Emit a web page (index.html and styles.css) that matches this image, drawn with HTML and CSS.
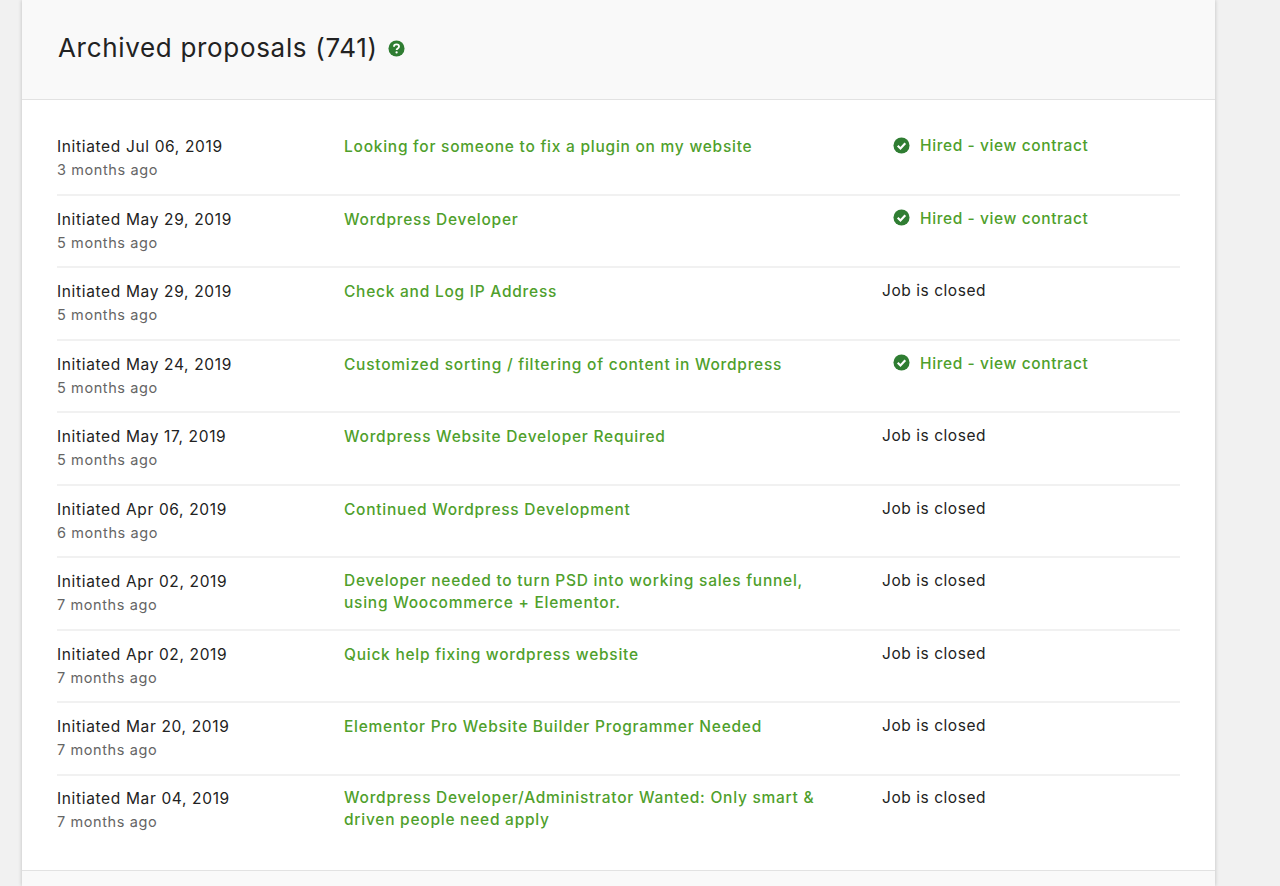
FILE: index.html
```html
<!DOCTYPE html>
<html lang="en">
<head>
<meta charset="utf-8">
<title>Archived proposals</title>
<link rel="stylesheet" href="styles.css">
</head>
<body>
<svg class="defs" width="0" height="0" aria-hidden="true">
  <symbol id="check" viewBox="0 0 18 18"><circle cx="9" cy="9" r="8.5" fill="#2f7d32"/><path d="M5 9.3l2.9 2.9L13 6.6" fill="none" stroke="#fff" stroke-width="2.3"/></symbol>
</svg>
<main class="card">
  <header class="card-head">
    <h1 class="title">Archived proposals (741)</h1>
    <svg class="help" viewBox="0 0 18 18" aria-hidden="true"><circle cx="9" cy="9" r="8.5" fill="#2f7d32"/><path d="M6.3 7.2C6.3 5.6 7.5 4.7 9 4.7s2.7.9 2.7 2.3c0 2-2.6 1.9-2.6 3.6" fill="none" stroke="#fff" stroke-width="1.9"/><circle cx="9.1" cy="13.2" r="1.2" fill="#fff"/></svg>
  </header>
  <section class="list">
    <div class="row"><div class="date"><div class="init">Initiated Jul 06, 2019</div><div class="ago">3 months ago</div></div><a class="job">Looking for someone to fix a plugin on my website</a><div class="status hired"><svg class="tick"><use href="#check"/></svg><a>Hired - view contract</a></div></div>
    <div class="row"><div class="date"><div class="init">Initiated May 29, 2019</div><div class="ago">5 months ago</div></div><a class="job">Wordpress Developer</a><div class="status hired"><svg class="tick"><use href="#check"/></svg><a>Hired - view contract</a></div></div>
    <div class="row"><div class="date"><div class="init">Initiated May 29, 2019</div><div class="ago">5 months ago</div></div><a class="job">Check and Log IP Address</a><div class="status">Job is closed</div></div>
    <div class="row"><div class="date"><div class="init">Initiated May 24, 2019</div><div class="ago">5 months ago</div></div><a class="job">Customized sorting / filtering of content in Wordpress</a><div class="status hired"><svg class="tick"><use href="#check"/></svg><a>Hired - view contract</a></div></div>
    <div class="row"><div class="date"><div class="init">Initiated May 17, 2019</div><div class="ago">5 months ago</div></div><a class="job">Wordpress Website Developer Required</a><div class="status">Job is closed</div></div>
    <div class="row"><div class="date"><div class="init">Initiated Apr 06, 2019</div><div class="ago">6 months ago</div></div><a class="job">Continued Wordpress Development</a><div class="status">Job is closed</div></div>
    <div class="row"><div class="date"><div class="init">Initiated Apr 02, 2019</div><div class="ago">7 months ago</div></div><a class="job job-two">Developer needed to turn PSD into working sales funnel,<br>using Woocommerce + Elementor.</a><div class="status">Job is closed</div></div>
    <div class="row"><div class="date"><div class="init">Initiated Apr 02, 2019</div><div class="ago">7 months ago</div></div><a class="job">Quick help fixing wordpress website</a><div class="status">Job is closed</div></div>
    <div class="row"><div class="date"><div class="init">Initiated Mar 20, 2019</div><div class="ago">7 months ago</div></div><a class="job">Elementor Pro Website Builder Programmer Needed</a><div class="status">Job is closed</div></div>
    <div class="row"><div class="date"><div class="init">Initiated Mar 04, 2019</div><div class="ago">7 months ago</div></div><a class="job job-two">Wordpress Developer/Administrator Wanted: Only smart &amp;<br>driven people need apply</a><div class="status">Job is closed</div></div>
  </section>
  <footer class="card-foot"></footer>
</main>
</body>
</html>
```
FILE: styles.css
```css
* { box-sizing: border-box; }
html, body { height: 100%; }
body {
  margin: 0;
  height: 886px;
  overflow: hidden;
  background: #f1f1f1;
  font-family: "Inter", "Liberation Sans", sans-serif;
  color: #222;
}
.defs { position: absolute; }
.card {
  width: 1193px;
  height: 886px;
  margin-left: 22px;
  background: #fff;
  box-shadow: 0 0 4px rgba(0, 0, 0, .22);
  display: flex;
  flex-direction: column;
}
.card-head {
  height: 100px;
  flex: none;
  display: flex;
  align-items: center;
  gap: 10px;
  padding: 0 35px 3px 36px;
  background: #f9f9f9;
  border-bottom: 1px solid #e2e2e2;
}
.title {
  margin: 0;
  font-size: 26px;
  line-height: 32px;
  font-weight: 400;
  letter-spacing: .68px;
  color: #222;
}
.help { width: 17px; height: 17px; margin-top: 1px; }
.list { flex: none; height: 770px; padding: 23px 35px 0; }
.row {
  height: 72.5px;
  display: grid;
  grid-template-columns: 287px 538px 1fr;
  align-items: start;
  padding-top: 12px;
  border-bottom: 2px solid #f1f1f1;
}
.row:last-child { border-bottom: 0; padding-top: 11.5px; }
.init { font-size: 15.5px; line-height: 24px; letter-spacing: .65px; color: #222; }
.ago { font-size: 14.5px; line-height: 24px; margin-top: -1px; letter-spacing: .6px; color: #656565; }
.job {
  font-size: 15.5px;
  line-height: 22px;
  font-weight: 500;
  letter-spacing: .75px;
  color: #4f9f2c;
  margin-top: 1px;
}
.job-two { margin-top: 0; }
.status { font-size: 15.5px; line-height: 22px; letter-spacing: .55px; color: #222; }
.hired { display: flex; align-items: center; gap: 10px; padding-left: 11px; color: #4f9f2c; font-weight: 500; letter-spacing: .6px; }
.tick { width: 17px; height: 17px; margin-top: -2px; flex: none; }
.card-foot { flex: 1; background: #f9f9f9; border-top: 1px solid #e2e2e2; }
```
